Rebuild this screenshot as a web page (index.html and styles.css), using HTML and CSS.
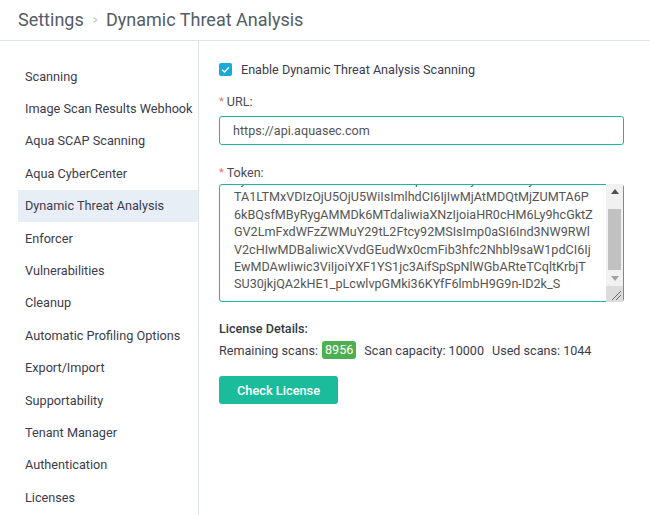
FILE: index.html
```html
<!DOCTYPE html>
<html>
<head>
<meta charset="utf-8">
<link rel="stylesheet" href="styles.css">
</head>
<body>
<header class="topbar">
  <span class="crumb">Settings</span>
  <span class="chev">&gt;</span>
  <span class="crumb">Dynamic Threat Analysis</span>
</header>
<div class="layout">
  <nav class="sidebar">
    <a class="nav-item">Scanning</a>
    <a class="nav-item">Image Scan Results Webhook</a>
    <a class="nav-item">Aqua SCAP Scanning</a>
    <a class="nav-item">Aqua CyberCenter</a>
    <a class="nav-item active">Dynamic Threat Analysis</a>
    <a class="nav-item">Enforcer</a>
    <a class="nav-item">Vulnerabilities</a>
    <a class="nav-item">Cleanup</a>
    <a class="nav-item">Automatic Profiling Options</a>
    <a class="nav-item">Export/Import</a>
    <a class="nav-item">Supportability</a>
    <a class="nav-item">Tenant Manager</a>
    <a class="nav-item">Authentication</a>
    <a class="nav-item">Licenses</a>
  </nav>
  <main class="content">
    <label class="check-row">
      <span class="checkbox"><svg width="9" height="7" viewBox="0 0 9 7"><path d="M1 3.6 L3.4 6 L8 1.2" fill="none" stroke="#fff" stroke-width="1.3"/></svg></span>
      <span>Enable Dynamic Threat Analysis Scanning</span>
    </label>
    <div class="field">
      <div class="label"><span class="req">*</span> URL:</div>
      <input class="input" type="text" value="https://api.aquasec.com">
    </div>
    <div class="field field-token">
      <div class="label"><span class="req">*</span> Token:</div>
      <div class="token-box">
        <div class="token-text" id="token">eyJhbGciOiJIUzI1NiIsInR5cCI6IkpXVCJ9.eyJleHAiOiIyMDIxLTAz
TA1LTMxVDIzOjU5OjU5WiIsImlhdCI6IjIwMjAtMDQtMjZUMTA6P
6kBQsfMByRygAMMDk6MTdaliwiaXNzIjoiaHR0cHM6Ly9hcGktZ
GV2LmFxdWFzZWMuY29tL2Ftcy92MSIsImp0aSI6Ind3NW9RWl
V2cHIwMDBaliwicXVvdGEudWx0cmFib3hfc2Nhbl9saW1pdCI6Ij
EwMDAwIiwic3ViIjoiYXF1YS1jc3AifSpSpNlWGbARteTCqltKrbjT
SU30jkjQA2kHE1_pLcwlvpGMki36KYfF6lmbH9G9n-ID2k_S</div>
        <div class="scrollbar">
          <div class="sb-btn"><svg width="8" height="5" viewBox="0 0 8 5"><path d="M0 5 L4 0 L8 5 Z" fill="#505050"/></svg></div>
          <div class="sb-track"><div class="sb-thumb"></div></div>
          <div class="sb-btn"><svg width="8" height="5" viewBox="0 0 8 5"><path d="M0 0 L4 5 L8 0 Z" fill="#a3a3a3"/></svg></div>
          <div class="sb-corner"><svg width="17" height="16" viewBox="0 0 17 16"><path d="M6 14 L15 5 M10 14 L15 9" stroke="#6a6a6a" stroke-width="1"/></svg></div>
        </div>
      </div>
    </div>
    <div class="license">
      <div class="license-title">License Details:</div>
      <div class="license-row">
        <span>Remaining scans:</span>
        <span class="badge">8956</span>
        <span class="gap">Scan capacity: 10000</span>
        <span>Used scans: 1044</span>
      </div>
    </div>
    <button class="btn">Check License</button>
  </main>
</div>
<script src="script.js"></script>
</body>
</html>
```
FILE: styles.css
```css
* { box-sizing: border-box; }
html, body { margin: 0; padding: 0; background: #fff; }
body {
  font-family: Roboto, "Liberation Sans", sans-serif;
  color: #3b3b4a;
  font-size: 12.6px;
  width: 650px;
  height: 515px;
  overflow: hidden;
}
.topbar {
  height: 41px;
  border-bottom: 1px solid #dfe4ea;
  display: flex;
  align-items: center;
  padding: 0 0 2px 18px;
  gap: 8px;
  font-size: 18px;
  color: #545c66;
}
.chev {
  font-size: 12px;
  color: #b5bac2;
  transform: scaleX(0.7);
  margin-top: 2px;
}
.layout {
  display: flex;
  height: 474px;
}
.sidebar {
  width: 199px;
  border-right: 1px solid #dfe4ea;
  padding-top: 19px;
  display: flex;
  flex-direction: column;
}
.nav-item {
  display: flex;
  align-items: center;
  height: 32.4px;
  margin-left: 18px;
  padding-left: 7px;
  color: #3b3b4c;
  font-size: 12.7px;
  white-space: nowrap;
}
.nav-item.active { background: #e8eef6; }
.content {
  flex: 1;
  padding: 21px 26px 0 20px;
  display: flex;
  flex-direction: column;
}
.check-row {
  display: flex;
  align-items: center;
  gap: 9px;
  height: 15px;
  color: #3b3b4c;
}
.checkbox {
  width: 13px;
  height: 13px;
  border-radius: 2px;
  background: #1aa9dc;
  display: flex;
  align-items: center;
  justify-content: center;
}
.field { margin-top: 17px; }
.field-token { margin-top: 20px; }
.label {
  color: #4a4a57;
  height: 16px;
  line-height: 16px;
  margin-bottom: 6px;
}
.field-token .label { margin-bottom: 3px; }
.req { color: #f0706a; font-size: 11px; vertical-align: 1px; }
.input {
  display: block;
  width: 405px;
  height: 29px;
  border: 1px solid #19b99c;
  border-radius: 3px;
  padding: 0 13px;
  font-family: inherit;
  font-size: 12.6px;
  color: #555;
  outline: none;
}
.token-box {
  display: flex;
  width: 405px;
  height: 118px;
  border: 1px solid #19b99c;
  border-radius: 3px;
}
.token-text {
  flex: 1;
  overflow: hidden;
  padding: 8px 2px 8px 14px;
  font-size: 12.6px;
  line-height: 17.4px;
  color: #555;
  white-space: pre;
}
.scrollbar {
  width: 17px;
  margin: -1px 0 -1px 0;
  background: #f1f1f1;
  display: flex;
  flex-direction: column;
}
.sb-btn {
  height: 15px;
  display: flex;
  align-items: center;
  justify-content: center;
}
.sb-track {
  flex: 1;
  padding: 10px 2px 1px 2px;
  display: flex;
}
.sb-thumb {
  flex: 1;
  background: #c1c1c1;
}
.sb-corner {
  height: 16px;
  background: #dcdcdc;
  display: flex;
}
.license { margin-top: 19px; }
.license-title {
  font-weight: 500;
  color: #333a44;
  height: 16px;
  line-height: 16px;
}
.license-row {
  margin-top: 4px;
  display: flex;
  align-items: center;
  gap: 4px;
  color: #3b3b4c;
  height: 18px;
}
.badge {
  background: #4caf50;
  color: #fff;
  border-radius: 3px;
  padding: 0 3px;
  height: 18px;
  line-height: 18px;
  margin-right: 4px;
}
.gap { margin-right: 4px; }
.btn {
  margin-top: 17px;
  align-self: flex-start;
  width: 119px;
  height: 28px;
  border: none;
  border-radius: 3px;
  background: #1abc9c;
  color: #fff;
  font-family: inherit;
  font-size: 12.8px;
  font-weight: 500;
}
```
FILE: script.js
```js
var t = document.getElementById('token');
t.scrollTop = t.scrollHeight;
```
